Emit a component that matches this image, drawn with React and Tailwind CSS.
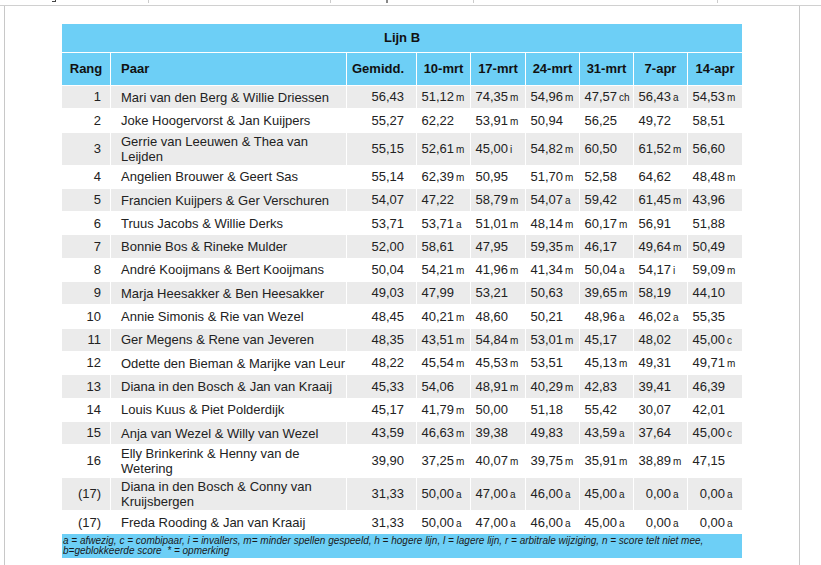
import React from "react";

const cols = "grid grid-cols-[48px_235px_69px_53px_54px_53px_53px_53px_54px] gap-x-px";

const dates = ["10-mrt", "17-mrt", "24-mrt", "31-mrt", "7-apr", "14-apr"];

// rang, paar, gemiddelde, scores per avond, twee regels?
const rows = [
  ["1", "Mari van den Berg & Willie Driessen", "56,43", ["51,12m", "74,35m", "54,96m", "47,57ch", "56,43a", "54,53m"]],
  ["2", "Joke Hoogervorst & Jan Kuijpers", "55,27", ["62,22", "53,91m", "50,94", "56,25", "49,72", "58,51"]],
  ["3", "Gerrie van Leeuwen & Thea van Leijden", "55,15", ["52,61m", "45,00i", "54,82m", "60,50", "61,52m", "56,60"], true],
  ["4", "Angelien Brouwer & Geert Sas", "55,14", ["62,39m", "50,95", "51,70m", "52,58", "64,62", "48,48m"]],
  ["5", "Francien Kuijpers & Ger Verschuren", "54,07", ["47,22", "58,79m", "54,07a", "59,42", "61,45m", "43,96"]],
  ["6", "Truus Jacobs & Willie Derks", "53,71", ["53,71a", "51,01m", "48,14m", "60,17m", "56,91", "51,88"]],
  ["7", "Bonnie Bos & Rineke Mulder", "52,00", ["58,61", "47,95", "59,35m", "46,17", "49,64m", "50,49"]],
  ["8", "André Kooijmans & Bert Kooijmans", "50,04", ["54,21m", "41,96m", "41,34m", "50,04a", "54,17i", "59,09m"]],
  ["9", "Marja Heesakker & Ben Heesakker", "49,03", ["47,99", "53,21", "50,63", "39,65m", "58,19", "44,10"]],
  ["10", "Annie Simonis & Rie van Wezel", "48,45", ["40,21m", "48,60", "50,21", "48,96a", "46,02a", "55,35"]],
  ["11", "Ger Megens & Rene van Jeveren", "48,35", ["43,51m", "54,84m", "53,01m", "45,17", "48,02", "45,00c"]],
  ["12", "Odette den Bieman & Marijke van Leur", "48,22", ["45,54m", "45,53m", "53,51", "45,13m", "49,31", "49,71m"]],
  ["13", "Diana in den Bosch & Jan van Kraaij", "45,33", ["54,06", "48,91m", "40,29m", "42,83", "39,41", "46,39"]],
  ["14", "Louis Kuus & Piet Polderdijk", "45,17", ["41,79m", "50,00", "51,18", "55,42", "30,07", "42,01"]],
  ["15", "Anja van Wezel & Willy van Wezel", "43,59", ["46,63m", "39,38", "49,83", "43,59a", "37,64", "45,00c"]],
  ["16", "Elly Brinkerink & Henny van de Wetering", "39,90", ["37,25m", "40,07m", "39,75m", "35,91m", "38,89m", "47,15"], true],
  ["(17)", "Diana in den Bosch & Conny van Kruijsbergen", "31,33", ["50,00a", "47,00a", "46,00a", "45,00a", "0,00a", "0,00a"], true],
  ["(17)", "Freda Rooding & Jan van Kraaij", "31,33", ["50,00a", "47,00a", "46,00a", "45,00a", "0,00a", "0,00a"]],
];

const Score = ({ value }) => {
  const m = value.match(/^([\d,]+)(\D*)$/);
  return (
    <div className="flex items-baseline">
      <span className="w-[37px] text-right">{m[1]}</span>
      {m[2] && <span className="ml-[2px] text-[10px]">{m[2]}</span>}
    </div>
  );
};

const Row = ({ row, index }) => {
  const [rang, paar, gem, scores, tall] = row;
  const bg = index % 2 === 0 ? "bg-[#ebebeb]" : "bg-white";
  const cell = `${bg} flex items-center`;
  return (
    <div className={`${cols} ${tall ? "h-[32px]" : "h-[22.3px]"}`}>
      <div className={`${cell} justify-end pr-[9px]`}>{rang}</div>
      <div className={`${cell} pl-[10px] pr-1 leading-[15px] ${tall ? "" : "whitespace-nowrap"}`}>{paar}</div>
      <div className={`${cell} justify-end pr-3`}>{gem}</div>
      {scores.map((s, i) => (
        <div key={i} className={cell}>
          <Score value={s} />
        </div>
      ))}
    </div>
  );
};

export default function App() {
  return (
    <div className="bg-white w-[821px] h-[565px] overflow-hidden font-['Liberation_Sans',Arial,sans-serif] text-[13px] text-[#222]">
      {/* afgesneden regel boven de rand */}
      <div className="flex h-[5px]">
        <div className="ml-[52px] mt-0 w-[4px] h-[2px] border-b border-r border-[#444]" />
        <div className="ml-[92px] w-px h-[3px] bg-[#ccc]" />
        <div className="ml-[181px] w-px h-[3px] bg-[#ccc]" />
        <div className="ml-[55px] w-[2px] h-[3px] bg-[#888]" />
        <div className="ml-[85px] w-px h-[3px] bg-[#ccc]" />
        <div className="ml-[243px] w-px h-[3px] bg-[#ccc]" />
      </div>
      <div className="border-t border-[#d0d0d0]">
        <div className="ml-[4px] w-[796px] h-[559px] border-x border-[#c8c8c8] pl-[57px] pt-[18px]">
          <div className="w-[680px] flex flex-col gap-y-px">
            <div className="h-[28px] bg-[#6dcff6] flex items-center justify-center font-bold text-[#111]">
              Lijn B
            </div>
            <div className={`${cols} h-[32px] font-bold text-[#111]`}>
              <div className="bg-[#6dcff6] flex items-center justify-center">Rang</div>
              <div className="bg-[#6dcff6] flex items-center pl-[10px]">Paar</div>
              <div className="bg-[#6dcff6] flex items-center justify-end pr-3">Gemidd.</div>
              {dates.map((d) => (
                <div key={d} className="bg-[#6dcff6] flex items-center justify-center">
                  {d}
                </div>
              ))}
            </div>
            {rows.map((r, i) => (
              <Row key={i} row={r} index={i} />
            ))}
            <div className="bg-[#6dcff6] min-h-[23.5px] px-px pt-[2px] text-[10px] leading-[10px] italic text-[#1a1a1a]">
              a = afwezig, c = combipaar, i = invallers, m= minder spellen gespeeld, h = hogere lijn, l = lagere lijn, r = arbitrale wijziging, n = score telt niet mee,
              <br />
              b=geblokkeerde score&nbsp; * = opmerking
            </div>
          </div>
        </div>
      </div>
    </div>
  );
}
